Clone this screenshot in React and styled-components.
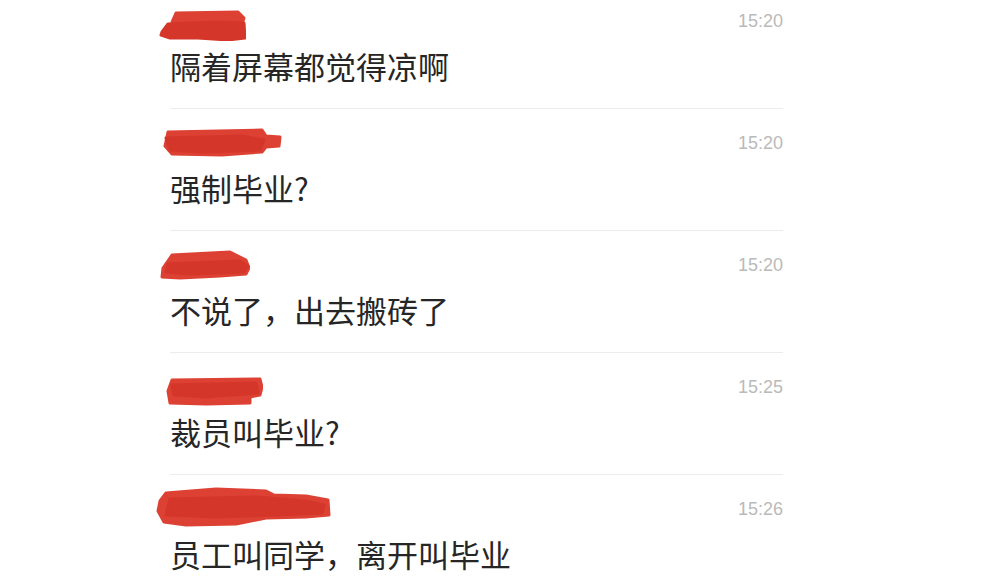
import styled, { createGlobalStyle } from "styled-components"

const Global = createGlobalStyle`
html, body {
    margin:0;
    padding:0;
    background:#ffffff;
    overflow:hidden;
}
`

const Page = styled.div`
width:1000px;
height:577px;
overflow:hidden;
background:#fff;
`

const List = styled.div`
width:613px;
margin:-13px 0 0 170px;
display:flex;
flex-direction:column;
`

const Row = styled.div`
padding:18px 0 22px;
border-bottom:solid 1px #ececec;
&:last-child{
    border-bottom:none;
}
`

const Header = styled.div`
height:41px;
display:flex;
justify-content:space-between;
align-items:flex-start;
`

const Mark = styled.svg`
display:block;
margin-top:${p => p.$top}px;
margin-left:${p => p.$left}px;
`

const Time = styled.span`
font-family:"Liberation Sans", Arial, sans-serif;
font-size:18px;
line-height:32px;
color:#bababa;
`

const Text = styled.p`
margin:0;
font-family:"Noto Sans CJK SC", "Noto Sans", sans-serif;
font-size:31px;
line-height:40px;
color:#262626;
white-space:nowrap;
`

// 红色涂抹（打码），每条的形状不同
const shapes = {
    a: [
        "M18 3 L80 2 L86 8 L84 14 L30 15 L14 12 Z",
        "M4 22 L10 14 L60 12 L86 13 L87 28 L70 30 L40 28 L12 28 L3 25 Z",
    ],
    b: [
        "M6 4 L100 2 L104 8 L118 9 L117 18 L104 19 L100 24 L60 27 L10 26 L3 18 Z",
        "M4 10 L80 8 L102 12 L98 22 L40 24 L8 22 Z",
    ],
    c: [
        "M12 5 L70 2 L78 6 L86 10 L89 18 L86 24 L60 26 L20 28 L2 27 L3 18 Z",
        "M8 14 L80 11 L88 16 L84 22 L30 24 L6 22 Z",
    ],
    d: [
        "M6 3 L94 2 L96 10 L94 18 L84 20 L84 26 L40 27 L4 26 L2 14 Z",
        "M6 8 L90 6 L92 16 L40 20 L8 18 Z",
    ],
    e: [
        "M10 6 L60 2 L110 4 L118 8 L150 9 L172 13 L173 28 L150 30 L110 31 L80 37 L30 38 L8 35 L2 24 L4 14 Z",
        "M14 12 L100 10 L150 14 L168 18 L166 26 L120 28 L60 30 L10 28 Z",
    ],
}

const Scribble = ({ kind, w, h, top, left }) => (
    <Mark width={w} height={h} viewBox={`0 0 ${w} ${h}`} $top={top} $left={left}>
        {shapes[kind].map((d, i) => (
            <path key={i} d={d} fill={i ? "#d5362a" : "#dc4133"} stroke={i ? "#d5362a" : "#dc4133"} strokeWidth="3" strokeLinejoin="round" />
        ))}
    </Mark>
)

const messages = [
    { kind: "a", w: 88, h: 31, top: 5, left: -12, time: "15:20", text: "隔着屏幕都觉得凉啊" },
    { kind: "b", w: 120, h: 30, top: 1, left: -8, time: "15:20", text: "强制毕业?" },
    { kind: "c", w: 90, h: 31, top: 1, left: -10, time: "15:20", text: "不说了，出去搬砖了" },
    { kind: "d", w: 97, h: 29, top: 6, left: -4, time: "15:25", text: "裁员叫毕业?" },
    { kind: "e", w: 175, h: 40, top: -6, left: -14, time: "15:26", text: "员工叫同学，离开叫毕业" },
]

const App = () => {
    return (
        <Page>
            <Global />
            <List>
                {messages.map((m, i) => (
                    <Row key={i}>
                        <Header>
                            <Scribble kind={m.kind} w={m.w} h={m.h} top={m.top} left={m.left} />
                            <Time>{m.time}</Time>
                        </Header>
                        <Text>{m.text}</Text>
                    </Row>
                ))}
            </List>
        </Page>
    )
}

export default App
